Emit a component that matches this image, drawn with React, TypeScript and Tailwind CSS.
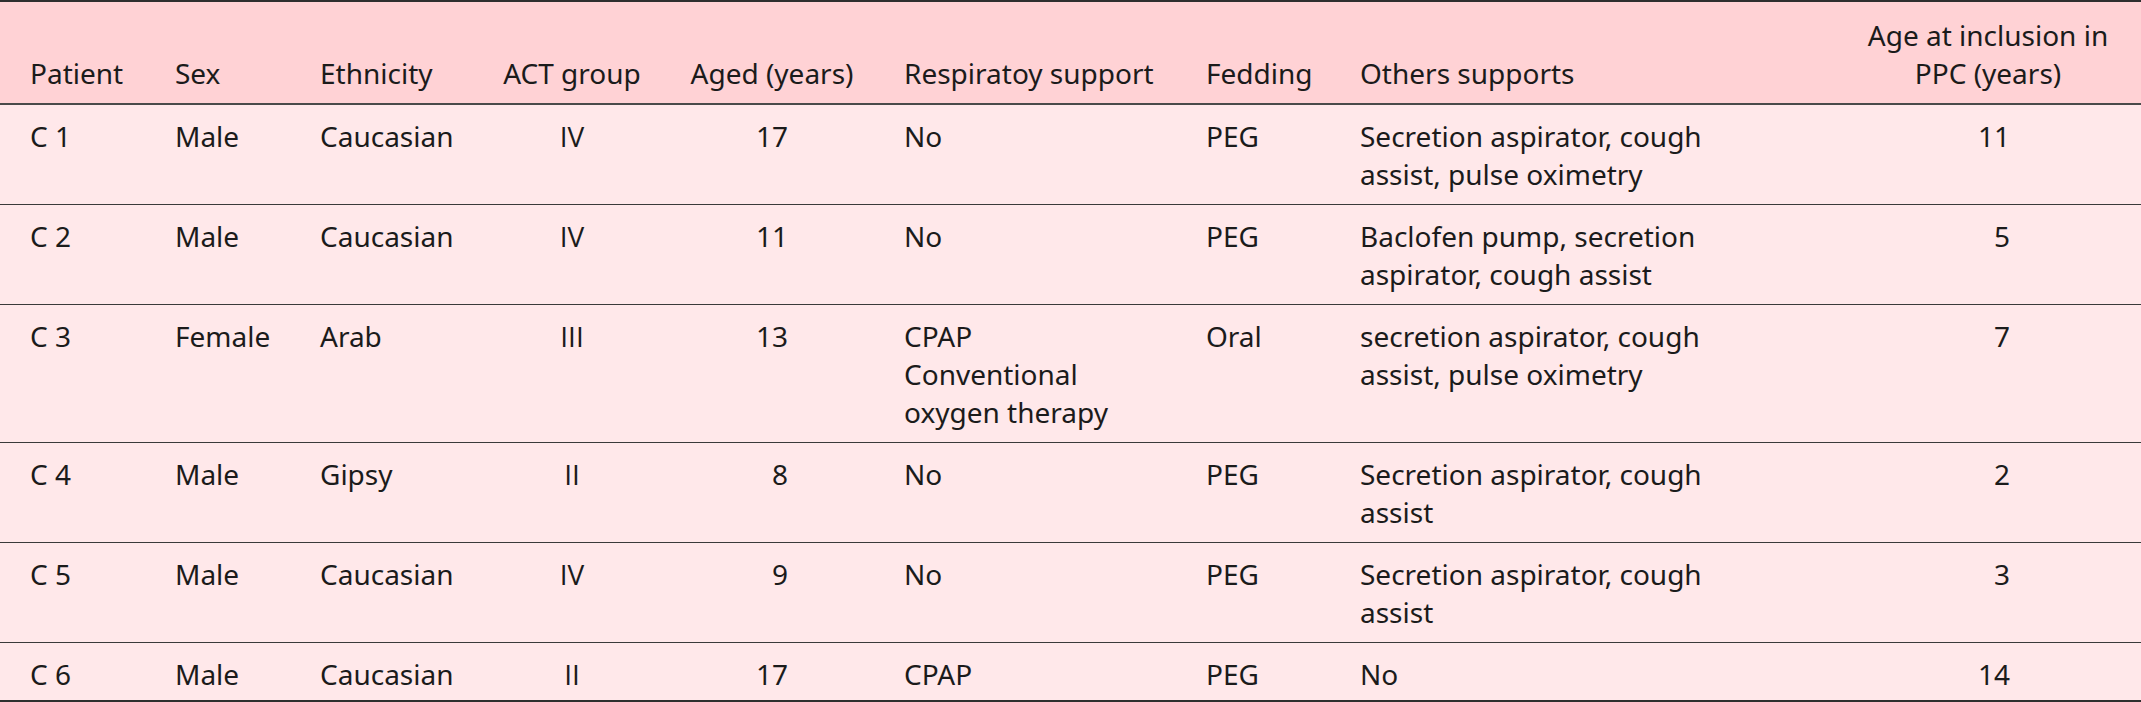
import React from "react";

type Row = {
  patient: string;
  sex: string;
  ethnicity: string;
  act: string;
  aged: string;
  respiratory: string[];
  feeding: string;
  others: string[];
  inclusion: string;
};

const rows: Row[] = [
  { patient: "C 1", sex: "Male", ethnicity: "Caucasian", act: "IV", aged: "17", respiratory: ["No"], feeding: "PEG", others: ["Secretion aspirator, cough", "assist, pulse oximetry"], inclusion: "11" },
  { patient: "C 2", sex: "Male", ethnicity: "Caucasian", act: "IV", aged: "11", respiratory: ["No"], feeding: "PEG", others: ["Baclofen pump, secretion", "aspirator, cough assist"], inclusion: "5" },
  { patient: "C 3", sex: "Female", ethnicity: "Arab", act: "III", aged: "13", respiratory: ["CPAP", "Conventional", "oxygen therapy"], feeding: "Oral", others: ["secretion aspirator, cough", "assist, pulse oximetry"], inclusion: "7" },
  { patient: "C 4", sex: "Male", ethnicity: "Gipsy", act: "II", aged: "8", respiratory: ["No"], feeding: "PEG", others: ["Secretion aspirator, cough", "assist"], inclusion: "2" },
  { patient: "C 5", sex: "Male", ethnicity: "Caucasian", act: "IV", aged: "9", respiratory: ["No"], feeding: "PEG", others: ["Secretion aspirator, cough", "assist"], inclusion: "3" },
  { patient: "C 6", sex: "Male", ethnicity: "Caucasian", act: "II", aged: "17", respiratory: ["CPAP"], feeding: "PEG", others: ["No"], inclusion: "14" },
];

function Lines({ lines }: { lines: string[] }) {
  return (
    <>
      {lines.map((l, i) => (
        <div key={i}>{l}</div>
      ))}
    </>
  );
}

export default function App() {
  const th = "align-bottom font-normal pt-[14px] pb-[11px]";

  return (
    <div className="w-[2141px] bg-white">
      <table className="w-[2141px] table-fixed border-collapse font-['Noto_Sans',sans-serif] text-[28px] leading-[38px] text-[#1b1b1b]">
        <colgroup>
          <col className="w-[161px]" />
          <col className="w-[145px]" />
          <col className="w-[184px]" />
          <col className="w-[164px]" />
          <col className="w-[236px]" />
          <col className="w-[302px]" />
          <col className="w-[154px]" />
          <col className="w-[504px]" />
          <col className="w-[291px]" />
        </colgroup>
        <thead>
          <tr className="bg-[#ffd2d5] border-t-2 border-t-[#2e2e2e] border-b-2 border-b-[#4a4a4a]">
            <th className={`${th} text-left pl-[30px]`}>Patient</th>
            <th className={`${th} text-left pl-[14px]`}>Sex</th>
            <th className={`${th} text-left pl-[14px]`}>Ethnicity</th>
            <th className={`${th} text-center`}>ACT group</th>
            <th className={`${th} text-center`}>Aged (years)</th>
            <th className={`${th} text-left pl-[14px]`}>Respiratoy support</th>
            <th className={`${th} text-left pl-[14px]`}>Fedding</th>
            <th className={`${th} text-left pl-[14px]`}>Others supports</th>
            <th className={`${th} text-center pl-[12px] pr-[27px]`}>
              Age at inclusion in
              <br />
              PPC (years)
            </th>
          </tr>
        </thead>
        <tbody>
          {rows.map((r, i) => {
            const last = i === rows.length - 1;
            const td = `align-top pt-[12px] ${last ? "pb-[7px]" : "pb-[11px]"}`;
            return (
              <tr
                key={r.patient}
                className={`bg-[#ffe8ea] ${last ? "border-b-2 border-b-[#2e2e2e]" : "border-b border-b-[#3a3a3a]"}`}
              >
                <td className={`${td} pl-[30px]`}>{r.patient}</td>
                <td className={`${td} pl-[14px]`}>{r.sex}</td>
                <td className={`${td} pl-[14px]`}>{r.ethnicity}</td>
                {/* roman numerals: Open Sans keeps the plain, unserifed I */}
                <td className={`${td} text-center font-['Open_Sans',sans-serif]`}>{r.act}</td>
                <td className={`${td} text-right pr-[102px]`}>{r.aged}</td>
                <td className={`${td} pl-[14px]`}>
                  <Lines lines={r.respiratory} />
                </td>
                <td className={`${td} pl-[14px]`}>{r.feeding}</td>
                <td className={`${td} pl-[14px]`}>
                  <Lines lines={r.others} />
                </td>
                <td className={`${td} text-right pr-[131px]`}>{r.inclusion}</td>
              </tr>
            );
          })}
        </tbody>
      </table>
    </div>
  );
}
